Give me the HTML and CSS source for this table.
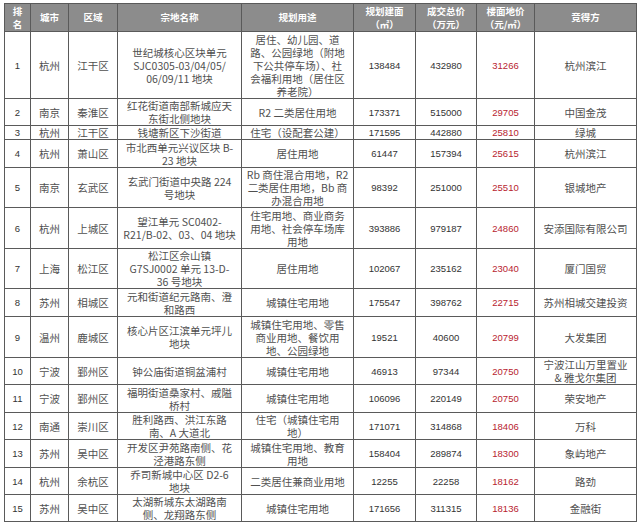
FILE: index.html
```html
<!DOCTYPE html>
<html lang="zh">
<head>
<meta charset="utf-8">
<title>土地成交榜</title>
<link rel="stylesheet" href="styles.css">
</head>
<body>
<table class="land">
<colgroup>
<col class="c1"><col class="c2"><col class="c3"><col class="c4"><col class="c5"><col class="c6"><col class="c7"><col class="c8"><col class="c9">
</colgroup>
<thead>
<tr class="h-head">
<th>排<br>名</th><th>城市</th><th>区域</th><th>宗地名称</th><th>规划用途</th><th>规划建面<br>（㎡）</th><th>成交总价<br>（万元）</th><th>楼面地价<br>（元/㎡）</th><th>竞得方</th>
</tr>
</thead>
<tbody>
<tr class="h67"><td class="num">1</td><td>杭州</td><td>江干区</td><td>世纪城核心区块单元<br>SJC0305-03/04/05/<br>06/09/11 地块</td><td>居住、幼儿园、道<br>路、公园绿地（附地<br>下公共停车场）、社<br>会福利用地（居住区<br>养老院）</td><td class="num">138484</td><td class="num">432980</td><td class="num red">31266</td><td>杭州滨江</td></tr>
<tr class="h27"><td class="num">2</td><td>南京</td><td>秦淮区</td><td>红花街道南部新城应天<br>东街北侧地块</td><td>R2 二类居住用地</td><td class="num">173371</td><td class="num">515000</td><td class="num red">29705</td><td>中国金茂</td></tr>
<tr class="h14"><td class="num">3</td><td>杭州</td><td>江干区</td><td>钱塘新区下沙街道</td><td>住宅（设配套公建）</td><td class="num">171595</td><td class="num">442880</td><td class="num red">25810</td><td>绿城</td></tr>
<tr class="h28"><td class="num">4</td><td>杭州</td><td>萧山区</td><td>市北西单元兴议区块 B-<br>23 地块</td><td>居住用地</td><td class="num">61447</td><td class="num">157394</td><td class="num red">25615</td><td>杭州滨江</td></tr>
<tr class="h40"><td class="num">5</td><td>南京</td><td>玄武区</td><td>玄武门街道中央路 224<br>号地块</td><td>Rb 商住混合用地，R2<br>二类居住用地，Bb 商<br>办混合用地</td><td class="num">98392</td><td class="num">251000</td><td class="num red">25510</td><td>银城地产</td></tr>
<tr class="h41"><td class="num">6</td><td>杭州</td><td>上城区</td><td>望江单元 SC0402-<br>R21/B-02、03、04 地块</td><td>住宅用地、商业商务<br>用地、社会停车场库<br>用地</td><td class="num">393886</td><td class="num">979187</td><td class="num red">24860</td><td>安添国际有限公司</td></tr>
<tr class="h40"><td class="num">7</td><td>上海</td><td>松江区</td><td>松江区佘山镇<br>G7SJ0002 单元 13-D-<br>36 号地块</td><td>居住用地</td><td class="num">102067</td><td class="num">235162</td><td class="num red">23040</td><td>厦门国贸</td></tr>
<tr class="h28"><td class="num">8</td><td>苏州</td><td>相城区</td><td>元和街道纪元路南、澄<br>和路西</td><td>城镇住宅用地</td><td class="num">175547</td><td class="num">398762</td><td class="num red">22715</td><td>苏州相城交建投资</td></tr>
<tr class="h41"><td class="num">9</td><td>温州</td><td>鹿城区</td><td>核心片区江滨单元坪儿<br>地块</td><td>城镇住宅用地、零售<br>商业用地、餐饮用<br>地、公园绿地</td><td class="num">19521</td><td class="num">40600</td><td class="num red">20799</td><td>大发集团</td></tr>
<tr class="h27"><td class="num">10</td><td>宁波</td><td>鄞州区</td><td>钟公庙街道铜盆浦村</td><td>城镇住宅用地</td><td class="num">46913</td><td class="num">97344</td><td class="num red">20750</td><td>宁波江山万里置业<br>&amp; 雅戈尔集团</td></tr>
<tr class="h28"><td class="num">11</td><td>宁波</td><td>鄞州区</td><td>福明街道桑家村、戚隘<br>桥村</td><td>城镇住宅用地</td><td class="num">106096</td><td class="num">220149</td><td class="num red">20750</td><td>荣安地产</td></tr>
<tr class="h26"><td class="num">12</td><td>南通</td><td>崇川区</td><td>胜利路西、洪江东路<br>南、A 大道北</td><td>住宅（城镇住宅用<br>地）</td><td class="num">171071</td><td class="num">314868</td><td class="num red">18406</td><td>万科</td></tr>
<tr class="h28"><td class="num">13</td><td>苏州</td><td>吴中区</td><td>开发区尹苑路南侧、花<br>泾港路东侧</td><td>城镇住宅用地、教育<br>用地</td><td class="num">158404</td><td class="num">289874</td><td class="num red">18300</td><td>象屿地产</td></tr>
<tr class="h27"><td class="num">14</td><td>杭州</td><td>余杭区</td><td>乔司新城中心区 D2-6<br>地块</td><td>二类居住兼商业用地</td><td class="num">12255</td><td class="num">22258</td><td class="num red">18162</td><td>路劲</td></tr>
<tr class="h26"><td class="num">15</td><td>苏州</td><td>吴中区</td><td>太湖新城东太湖路南<br>侧、龙翔路东侧</td><td>城镇住宅用地</td><td class="num">171656</td><td class="num">311315</td><td class="num red">18136</td><td>金融街</td></tr>
</tbody>
</table>
</body>
</html>
```

FILE: styles.css
```css
html, body {
  margin: 0;
  padding: 0;
  background: #ffffff;
}
body {
  padding: 3px 0 0 4px;
}
.land {
  border-collapse: collapse;
  table-layout: fixed;
  width: 632px;
  font-family: "Noto Sans CJK SC", "Liberation Sans", sans-serif;
  font-size: 10.5px;
  line-height: 13px;
  color: #505050;
}
.c1 { width: 26px; }
.c2 { width: 38px; }
.c3 { width: 49px; }
.c4 { width: 124px; }
.c5 { width: 112px; }
.c6 { width: 62px; }
.c7 { width: 61px; }
.c8 { width: 58px; }
.c9 { width: 102px; }
.land th,
.land td {
  border: 1px solid #5a5a5a;
  padding: 0;
  text-align: center;
  vertical-align: middle;
  white-space: nowrap;
  overflow: hidden;
}
.land th {
  background: #8c8c8c;
  color: #ffffff;
  font-weight: 700;
  font-size: 9.5px;
  line-height: 13px;
}
.h-head { height: 28px; }
.h14 { height: 14px; }
.h26 { height: 26px; }
.h27 { height: 27px; }
.h28 { height: 28px; }
.h40 { height: 40px; }
.h41 { height: 41px; }
.h67 { height: 67px; }
.land td.num {
  font-family: "Liberation Sans", Arial, sans-serif;
  font-size: 9.5px;
  color: #333333;
}
.land td.red {
  color: #b8232f;
}
```
